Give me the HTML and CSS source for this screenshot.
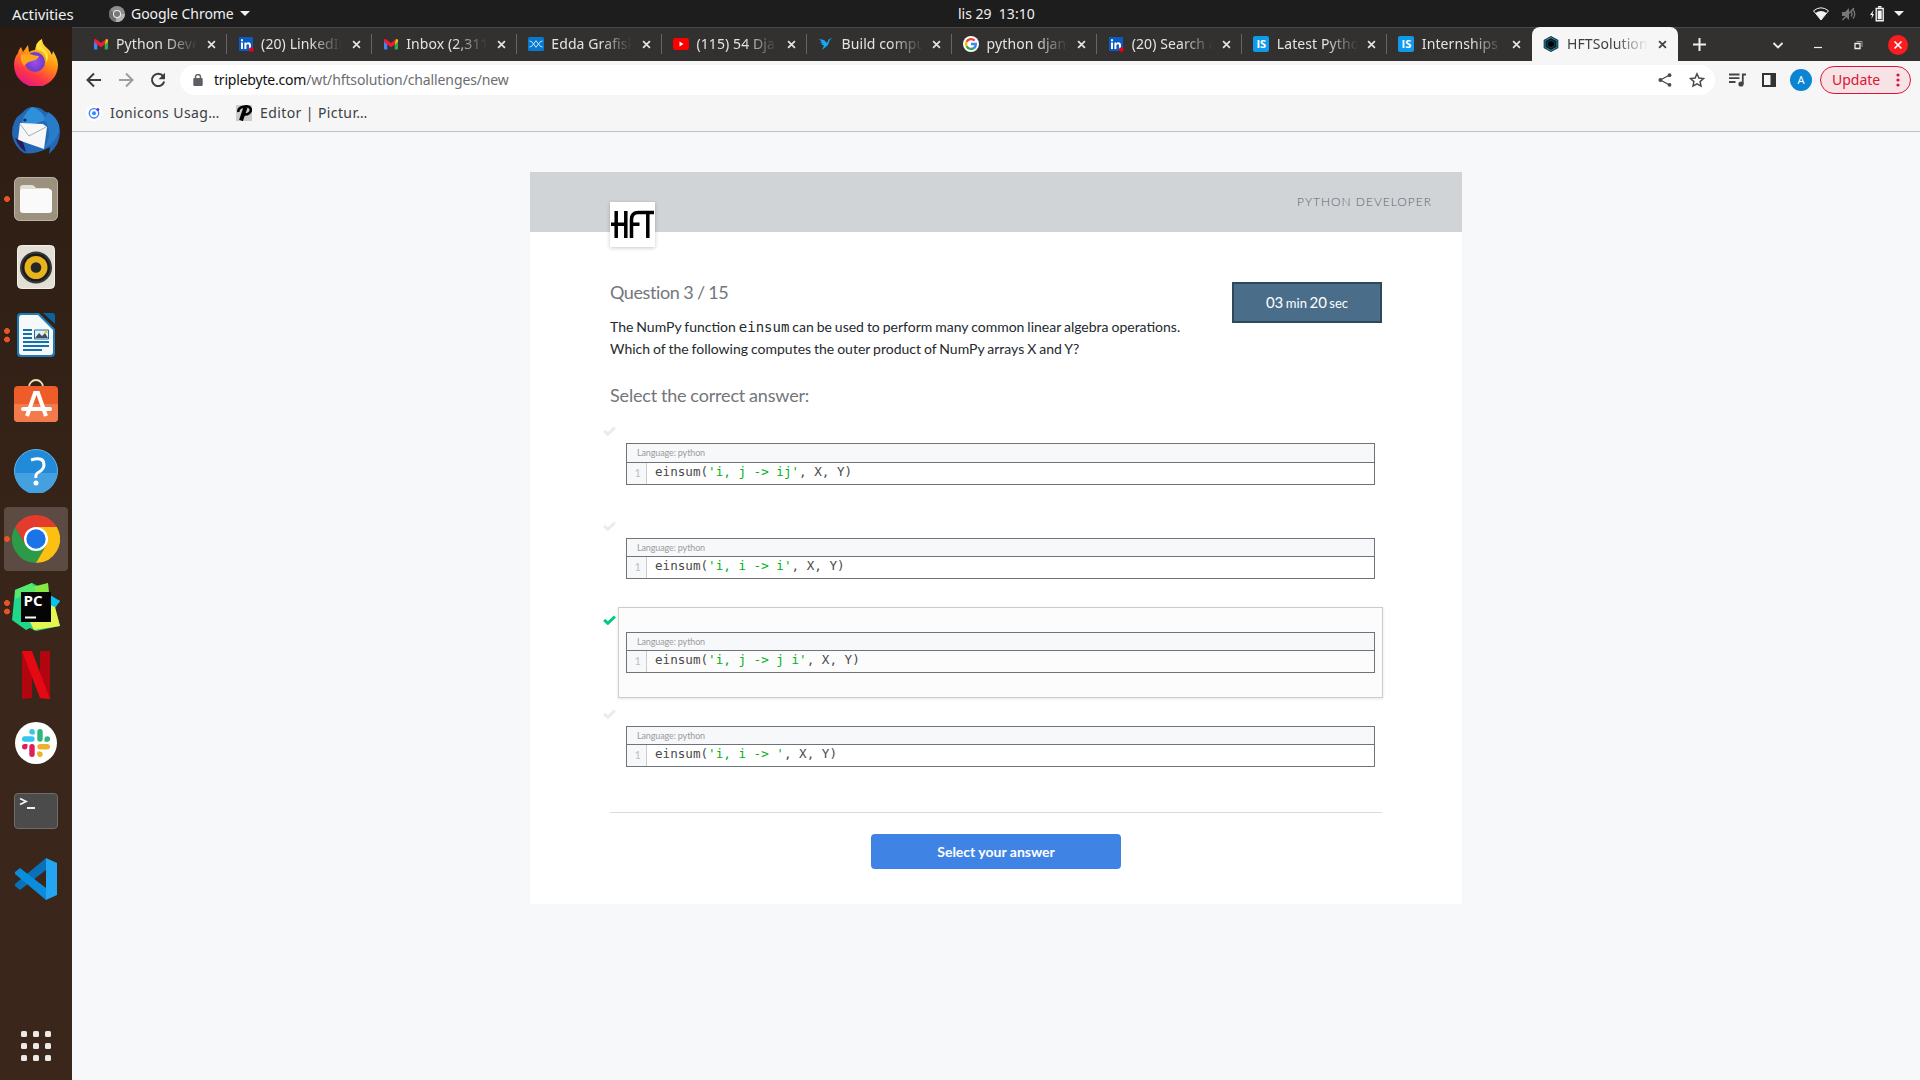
FILE: index.html
```html
<!DOCTYPE html>
<html lang="en">
<head>
<meta charset="utf-8">
<title>HFTSolution</title>
<link rel="stylesheet" href="styles.css">
</head>
<body>
<svg class="defs" width="0" height="0">
  <symbol id="x" viewBox="0 0 10 10"><path d="M1.2 1.2l7.6 7.6M8.8 1.2L1.2 8.8" stroke="currentColor" stroke-width="1.9" fill="none"/></symbol>
  <symbol id="gmail" viewBox="0 0 16 16"><path d="M1 4v8.5q0 1 1 1h2.300V7z" fill="#4285f4"/><path d="M15 4v8.500q0 1-1 1h-2.300V7z" fill="#34a853"/><path d="M11.700 4.500L13 3.200q2-1 2 1.300v1.300l-3.300 2.600z" fill="#fbbc04"/><path d="M1 4.500q0-2.300 2-1.300L8 7l5-3.800-1.300 5.200L8 11.200 4.300 8.400 1 5.800z" fill="#ea1f35"/></symbol>
  <symbol id="linkedin" viewBox="0 0 16 16"><rect x="1" y="1" width="14" height="14" rx="1" fill="#0a5bc4"/><path d="M3 6.500h2V13H3zM3 3.300h2v2H3zM6.400 6.500h1.900v.9c1.200-1.700 4.700-1.400 4.700 1.600v4h-2V9.600c0-2-2.600-1.900-2.600 0V13h-2z" fill="#fff"/><circle cx="13.300" cy="13.600" r="2.400" fill="#f00014"/></symbol>
  <symbol id="edda" viewBox="0 0 16 16"><rect y="1" width="16" height="14" rx="1.500" fill="#0878d1"/><path d="M1.500 5Q4 5 5.500 8T9 11M1.500 11Q4 11 5.500 8T9 5M7 5q2 0 3.500 3t4 3M7 11q2 0 3.500-3t4-3" stroke="#c4e4fb" stroke-width="1" fill="none"/></symbol>
  <symbol id="youtube" viewBox="0 0 16 16"><rect y="2" width="16" height="12" rx="3" fill="#f00"/><path d="M6.500 5.500v5l4-2.500z" fill="#fff"/></symbol>
  <symbol id="bird" viewBox="0 0 16 16"><path d="M1 3l5 1 3 3 2-4 4-1-3 1.500-2 5.500-3 2.500-3 2.500 2-4.500-3-1 2-.6-3-1.500 2-.3z" fill="#17a7f8"/></symbol>
  <symbol id="google" viewBox="0 0 16 16"><circle cx="8" cy="8" r="8" fill="#fff"/><g fill="none" stroke-width="2.400"><path d="M11.600 4.600A5 5 0 0 0 3.600 5.800" stroke="#ea4335"/><path d="M3.600 5.700a5 5 0 0 0 0 4.600" stroke="#fbbc04"/><path d="M3.600 10.200a5 5 0 0 0 7.800 1.500" stroke="#34a853"/><path d="M11.300 11.800A5 5 0 0 0 12.800 8H8" stroke="#4285f4"/></g></symbol>
  <symbol id="hex" viewBox="0 0 16 16"><path d="M8 0l7.300 4v8L8 16 .7 12V4z" fill="#111b22"/><path d="M8 1.500l6 3.300v6.400l-6 3.300-6-3.300V4.800z" fill="none" stroke="#1686a3" stroke-width="1.200"/><path d="M8 4.500l3.500 1.700v3.600L8 11.500 4.500 9.800V6.200z" fill="#000" stroke="#0d5a70" stroke-width=".7"/></symbol>
  <symbol id="check" viewBox="0 0 13 10"><path d="M1.200 4.800l3.600 3.500L11.900 1.500" fill="none" stroke="currentColor" stroke-width="3"/></symbol>
</svg>

<header class="topbar">
  <span class="activities">Activities</span>
  <span class="appmenu">
    <svg width="16" height="16" viewBox="0 0 16 16"><circle cx="8" cy="8" r="8" fill="#8f8f8f"/><path d="M8 8L1 4a8 8 0 0 0 5 11.800z" fill="#6f6f6f"/><path d="M8 8h8a8 8 0 0 1-9 8z" fill="#b4b4b4"/><circle cx="8" cy="8" r="4" fill="#eee"/><circle cx="8" cy="8" r="3" fill="#777"/></svg>
    <span class="app-name">Google Chrome</span>
    <i class="caret"></i>
  </span>
  <span class="clock">lis 29&nbsp; 13:10</span>
  <span class="tray">
    <svg width="16" height="14" viewBox="0 0 16 14"><path d="M.5 3.800q7.500-6 15 0L8 13z" fill="none" stroke="#f2f2f2"/><path d="M2.500 6q5.500-4 11 0L8 13z" fill="#f2f2f2"/></svg>
    <svg width="16" height="14" viewBox="0 0 16 14"><path d="M1 5h3l4-4v12L4 9H1z" fill="#777"/><path d="M10 4.500q2 2.500 0 5M12 2.500q3.500 4.500 0 9M1.500 13L13 1" fill="none" stroke="#777" stroke-width="1.300"/></svg>
    <svg width="16" height="16" viewBox="0 0 16 16"><path d="M4.500 4L1 9h2l-.5 4L5 8H3.500z" fill="#f2f2f2"/><path d="M7.200 2.500h7v12.300h-7zM9 .8h3.500" fill="none" stroke="#f2f2f2" stroke-width="1.400"/><path d="M8.700 4.500h4v8.800h-4z" fill="#f2f2f2"/></svg>
    <i class="caret"></i>
  </span>
</header>

<div class="desktop">
<nav class="dock">
  <div class="app firefox"><svg width="46" height="48" viewBox="0 0 46 48"><defs><linearGradient id="ff" x1=".8" y1="0" x2=".3" y2="1"><stop offset="0" stop-color="#fff44f"/><stop offset=".4" stop-color="#ff980e"/><stop offset=".75" stop-color="#ff3647"/><stop offset="1" stop-color="#e31587"/></linearGradient><radialGradient id="fp"><stop offset="0" stop-color="#a04bf0"/><stop offset="1" stop-color="#6a3cc8"/></radialGradient></defs><path d="M5 15q1-4 3-6l2 5 5-7 1 7q3-2 6-2 1-7 7-11 0 5 5 9 3 2 5 7l1-4q5 8 5 14a22 22 0 0 1-44 0q0-7 4-12z" fill="url(#ff)"/><circle cx="22" cy="24" r="10" fill="url(#fp)"/><path d="M8 17q6-3 12 0 3 1 6 1-1 4-7 5-5 1-8 5-4-5-3-11z" fill="#ffa51e"/><path d="M24 12q10 1 9 13 5-9-2-14-5-5-2-10-8 4-5 11z" fill="#ffe13e"/></svg></div>
  <div class="app"><svg width="48" height="48" viewBox="0 0 48 48"><path d="M20 0q9 0 12 4 14 5 16 20 0 14-11 23l1-7q-14 8-26 6-10-6-12-19Q0 12 10 6q5-6 10-6z" fill="#2468b5"/><path d="M20 0q10 3 14 13l-24 8Q8 10 20 0z" fill="#2f8fda"/><path d="M8 16l23 1 4 3-3 22-26-9z" fill="#f7f7f8"/><path d="M8 17l9 12 17-9" fill="none" stroke="#a9adb3"/><path d="M32 12q10 14 0 30 17-11 15-24-3-9-11-13z" fill="#287cca"/><circle cx="13" cy="13" r="1.600" fill="#132b49"/><path d="M3 31q4 10 11 14l-3-10z" fill="#2a1d5c"/></svg></div>
  <div class="app run1"><svg width="44" height="44" viewBox="0 0 44 44"><rect x=".5" y=".5" width="43" height="43" rx="5" fill="#9b917e" stroke="#bcb5a5"/><path d="M6 11q0-3 3-3h9q2 0 4 3h13v8H6z" fill="#e3dfd3"/><rect x="6" y="12" width="32" height="24" rx="3" fill="#fafafa"/></svg></div>
  <div class="app"><svg width="38" height="44" viewBox="0 0 38 44"><rect x=".5" y=".5" width="37" height="43" rx="4" fill="#e3dfd5" stroke="#f3f1ea"/><circle cx="19" cy="22.500" r="16" fill="#38383a"/><circle cx="19" cy="22.500" r="14" fill="#1c1c1c"/><circle cx="19" cy="22.500" r="11.500" fill="#e9b41b"/><circle cx="19" cy="22.500" r="5.300" fill="#262626"/></svg></div>
  <div class="app run2"><svg width="38" height="44" viewBox="0 0 38 44"><path d="M4 0h18l16 16v24q0 4-4 4H4q-4 0-4-4V4q0-4 4-4z" fill="#1a7db8"/><path d="M2 5q0-3 3-3h16l15 15v22q0 3-3 3H5q-3 0-3-3z" fill="#f6f8f9"/><path d="M26 0h9q3 0 3 3v8z" fill="#0b62a0"/><path d="M6 17h9M6 21h9M6 25h9M6 29h26M6 33h26M6 37h19" stroke="#1372ac" stroke-width="2"/><path d="M17.500 17h14v9h-14z" fill="#dff2fb" stroke="#1372ac"/><path d="M18 25l4-5 3 3 3-3 3 5z" fill="#454e54"/><circle cx="29" cy="19" r="1.500" fill="#f5c516"/></svg></div>
  <div class="app store"><svg width="44" height="46" viewBox="0 0 44 46"><path d="M15 10V8a7 7 0 0 1 14 0v2" fill="none" stroke="#f3dfb2" stroke-width="1.800"/><rect y="7" width="44" height="36" rx="4" fill="#ee5c29"/><path d="M0 25h44v14q0 4-4 4H4q-4 0-4-4z" fill="#f37a4c"/><path d="M13 37l8-23h3l8 23" fill="none" stroke="#fff" stroke-width="4"/><path d="M9 30h27" stroke="#fff" stroke-width="4" stroke-linecap="round"/></svg></div>
  <div class="app"><svg width="44" height="44" viewBox="0 0 44 44"><circle cx="22" cy="22" r="21.500" fill="#228bd9" stroke="#65b3e9"/><path d="M1 24a21 21 0 0 0 42 0z" fill="#45a0e0"/><path d="M17 11q13-4 13 5 0 4-5 7-4 2-3 6" fill="none" stroke="#fff" stroke-width="3"/><circle cx="22" cy="34" r="2.500" fill="#fff"/></svg></div>
  <div class="app run1 current"><svg width="48" height="48" viewBox="0 0 48 48"><path d="M3.200 12A24 24 0 0 1 44.800 12H24L13.600 30z" fill="#e33b2e"/><path d="M3.200 12l10.400 18h20.800L24 48A24 24 0 0 1 3.200 12z" fill="#2c9b48"/><path d="M24 12h20.800A24 24 0 0 1 24 48l10.400-18z" fill="#fcc013"/><circle cx="24" cy="24" r="12" fill="#fff"/><circle cx="24" cy="24" r="9.700" fill="#1b73e8"/></svg></div>
  <div class="app run2"><svg width="48" height="48" viewBox="0 0 48 48"><path d="M3 7L20 0l8 4 8-4 1 14 11 4-5 7 5 18-24 5-6-3-4 2L0 37z" fill="#21d789"/><path d="M20 4l16-4 1 12-20 2z" fill="#86e843"/><path d="M38 12l10 6-6 7-5 1z" fill="#07c3f2"/><path d="M38 22l5 2 5 19-26 4-4-8z" fill="#e5f650"/><path d="M3 7l17-7 4 8-21 8z" fill="#57e96e"/><rect x="9" y="9" width="30" height="30" fill="#050505"/><path d="M13 34.500h11" stroke="#fff" stroke-width="2"/><text x="11.500" y="23" class="pc">PC</text></svg></div>
  <div class="app"><svg width="28" height="48" viewBox="0 0 28 48"><path d="M0 0h10v47L0 48zM18 0h10v48l-10-1z" fill="#b1060f"/><path d="M0 0h10l18 48-10-1z" fill="#e50914"/></svg></div>
  <div class="app"><svg width="42" height="42" viewBox="0 0 42 42"><circle cx="21" cy="21" r="21" fill="#fff"/><g fill="none" stroke-width="5.400" stroke-linecap="round"><path d="M17 9.700h0M9.700 17H17" stroke="#36c5f0"/><path d="M25 9.700V17M32.300 17h0" stroke="#2eb67d"/><path d="M25 24.700h7.300M25 32.300h0" stroke="#ecb22e"/><path d="M17 24.700v7.600M9.700 24.700h0" stroke="#e01e5a"/></g><path d="M17 9.700h2.700v2.700H17z" fill="#36c5f0"/><path d="M29.600 17h2.700v2.700h-2.700z" fill="#2eb67d"/><path d="M22.300 29.600H25v2.700h-2.700z" fill="#ecb22e"/><path d="M9.700 22h2.700v2.700H9.700z" fill="#e01e5a"/></svg></div>
  <div class="app"><svg width="44" height="36" viewBox="0 0 44 36"><rect x=".5" y=".5" width="43" height="35" rx="3.500" fill="#4b4b4b" stroke="#6d6d6d"/><path d="M6 5.500l6 3-6 3M13 15h8" fill="none" stroke="#f4f4f4" stroke-width="1.800"/></svg></div>
  <div class="app"><svg width="42" height="42" viewBox="0 0 42 42"><path d="M31 0v12L5 32l-5-4v-2z" fill="#0871b8"/><path d="M31 42V30L5 10l-5 4v2z" fill="#0c8cdc"/><path d="M31 0l11 5v32l-11 5z" fill="#24a5f2"/></svg></div>
  <div class="all-apps"><i></i><i></i><i></i><i></i><i></i><i></i><i></i><i></i><i></i></div>
</nav>

<div class="browser">
  <div class="tabs">
    <div class="tab"><svg class="fav"><use href="#gmail"/></svg><span class="title">Python Developer</span><svg class="close"><use href="#x"/></svg></div>
    <div class="tab"><svg class="fav"><use href="#linkedin"/></svg><span class="title">(20) LinkedIn</span><svg class="close"><use href="#x"/></svg></div>
    <div class="tab"><svg class="fav"><use href="#gmail"/></svg><span class="title">Inbox (2,311)</span><svg class="close"><use href="#x"/></svg></div>
    <div class="tab"><svg class="fav"><use href="#edda"/></svg><span class="title">Edda Grafisk</span><svg class="close"><use href="#x"/></svg></div>
    <div class="tab"><svg class="fav"><use href="#youtube"/></svg><span class="title">(115) 54 Django</span><svg class="close"><use href="#x"/></svg></div>
    <div class="tab"><svg class="fav"><use href="#bird"/></svg><span class="title">Build compu</span><svg class="close"><use href="#x"/></svg></div>
    <div class="tab"><svg class="fav"><use href="#google"/></svg><span class="title">python django</span><svg class="close"><use href="#x"/></svg></div>
    <div class="tab"><svg class="fav"><use href="#linkedin"/></svg><span class="title">(20) Search all</span><svg class="close"><use href="#x"/></svg></div>
    <div class="tab"><b class="fav is">IS</b><span class="title">Latest Python</span><svg class="close"><use href="#x"/></svg></div>
    <div class="tab last"><b class="fav is">IS</b><span class="title">Internships</span><svg class="close"><use href="#x"/></svg></div>
    <div class="tab active"><svg class="fav"><use href="#hex"/></svg><span class="title">HFTSolution</span><svg class="close"><use href="#x"/></svg></div>
    <svg class="plus" width="13" height="13" viewBox="0 0 13 13"><path d="M6.500 0v13M0 6.500h13" stroke="#eee" stroke-width="2"/></svg>
    <div class="window-buttons">
      <svg width="20" height="20" viewBox="0 0 20 20"><path d="M5.500 8l4.500 4.500L14.500 8" fill="none" stroke="#eee" stroke-width="1.800"/></svg>
      <svg width="20" height="20" viewBox="0 0 20 20"><path d="M6 12.500h8" stroke="#eee" stroke-width="1.200"/></svg>
      <svg width="20" height="20" viewBox="0 0 20 20"><path d="M7 8.500h5v5H7z" fill="none" stroke="#eee" stroke-width="1.300"/><path d="M8.500 6.500H14V12" fill="none" stroke="#999"/></svg>
      <svg width="20" height="20" viewBox="0 0 20 20"><circle cx="10" cy="10" r="10" fill="#fb1d1d"/><path d="M6.500 6.500l7 7M13.500 6.500l-7 7" stroke="#fff" stroke-width="1.600"/></svg>
    </div>
  </div>
  <div class="toolbar">
    <svg width="16" height="16" viewBox="0 0 16 16"><path d="M15 8H2M8 1.500L1.500 8 8 14.500" fill="none" stroke="#3c3c3c" stroke-width="2"/></svg>
    <svg width="16" height="16" viewBox="0 0 16 16"><path d="M1 8h13M8 1.500L14.500 8 8 14.500" fill="none" stroke="#9d9d9d" stroke-width="2"/></svg>
    <svg width="16" height="16" viewBox="0 0 16 16"><path d="M13.200 4.200A6.200 6.200 0 1 0 14.200 9.500" fill="none" stroke="#3c3c3c" stroke-width="2"/><path d="M15 .8v6.400H8.600z" fill="#3c3c3c"/></svg>
    <div class="omnibox">
      <svg width="10" height="12" viewBox="0 0 10 12"><rect x=".3" y="4" width="9.400" height="8" rx="1" fill="#5c6065"/><path d="M2.500 5V3a2.500 2.500 0 0 1 5 0v2" fill="none" stroke="#5c6065" stroke-width="1.400"/></svg>
      <span class="url"><b>triplebyte.com</b>/wt/hftsolution/challenges/new</span>
      <svg width="14" height="14" viewBox="0 0 14 14"><path d="M11.500 2L2.500 7l9 5" fill="none" stroke="#4a4a4a" stroke-width="1.300"/><circle cx="11.500" cy="2.200" r="1.900" fill="#4a4a4a"/><circle cx="2.400" cy="7" r="1.900" fill="#4a4a4a"/><circle cx="11.500" cy="11.800" r="1.900" fill="#4a4a4a"/></svg>
      <svg width="16" height="16" viewBox="0 0 16 16"><path d="M8 1.800l1.900 4.200 4.600.5-3.400 3.100.9 4.500L8 11.800l-4 2.300.9-4.500L1.500 6.500 6.100 6z" fill="none" stroke="#4a4a4a" stroke-width="1.500"/></svg>
    </div>
    <svg class="media" width="17" height="14" viewBox="0 0 17 14"><path d="M0 1.500h10.500M0 5.200h10.500M0 9h6.500M13.800 11V1.500H17" fill="none" stroke="#444" stroke-width="1.800"/><circle cx="12" cy="11" r="2.600" fill="#444"/></svg>
    <svg class="panel" width="14" height="14" viewBox="0 0 14 14"><path d="M1 1h12v12H1z" fill="none" stroke="#333" stroke-width="2"/><path d="M8.500 0H14v14H8.500z" fill="#333"/></svg>
    <span class="avatar">A</span>
    <span class="update">Update<svg width="4" height="14" viewBox="0 0 4 14"><g fill="#dc1433"><circle cx="2" cy="2" r="1.600"/><circle cx="2" cy="7" r="1.600"/><circle cx="2" cy="12" r="1.600"/></g></svg></span>
  </div>
  <div class="bookmarks">
    <svg width="16" height="16" viewBox="0 0 16 16"><circle cx="8" cy="8" r="8" fill="#fff"/><circle cx="8" cy="8.300" r="4.700" fill="none" stroke="#3a7dff" stroke-width="1.400"/><circle cx="8" cy="8.300" r="2" fill="#2d8cff"/><circle cx="11.800" cy="4.500" r="1.500" fill="#5a28ff"/></svg>
    <span class="bm1">Ionicons Usag…</span>
    <svg width="16" height="16" viewBox="0 0 16 16"><rect width="16" height="16" fill="#ccc"/><path d="M2.500 7C1 1 13 0 14.500 3.500S12 10 8 9.500" fill="none" stroke="#000" stroke-width="2.600"/><path d="M9.500 2.500L5 15.500" stroke="#000" stroke-width="4"/></svg>
    <span class="bm2">Editor | Pictur…</span>
  </div>

  <main class="page">
    <section class="card">
      <div class="banner">
        <div class="logo"><svg width="45" height="45" viewBox="0 0 45 45"><path d="M6.200 9v27M15.800 9v27M1 22.300h16.500M21.500 36V17.500q0-7 7-7H44M21.500 22.300h8M37.800 10.500V36" fill="none" stroke="#000" stroke-width="3.500"/></svg></div>
        <span class="role">PYTHON DEVELOPER</span>
      </div>
      <div class="body">
        <div class="intro">
          <div class="question">
            <h2>Question 3 / 15</h2>
            <p>The NumPy function <code>einsum</code> can be used to perform many common linear algebra operations. Which of the following computes the outer product of NumPy arrays X and Y?</p>
          </div>
          <div class="timer"><span>03</span> min <span>20</span> sec</div>
        </div>
        <h2 class="prompt">Select the correct answer:</h2>
        <div class="answers">
          <div class="answer first"><svg class="tick"><use href="#check"/></svg><div class="choice"><div class="code"><div class="lang">Language: python</div><div class="line"><i>1</i><pre>einsum(<em>'i, j -&gt; ij'</em>, X, Y)</pre></div></div></div></div>
          <div class="answer"><svg class="tick"><use href="#check"/></svg><div class="choice"><div class="code"><div class="lang">Language: python</div><div class="line"><i>1</i><pre>einsum(<em>'i, i -&gt; i'</em>, X, Y)</pre></div></div></div></div>
          <div class="answer selected"><svg class="tick"><use href="#check"/></svg><div class="choice"><div class="code"><div class="lang">Language: python</div><div class="line"><i>1</i><pre>einsum(<em>'i, j -&gt; j i'</em>, X, Y)</pre></div></div></div></div>
          <div class="answer"><svg class="tick"><use href="#check"/></svg><div class="choice"><div class="code"><div class="lang">Language: python</div><div class="line"><i>1</i><pre>einsum(<em>'i, i -&gt; '</em>, X, Y)</pre></div></div></div></div>
        </div>
        <div class="submit"><button>Select your answer</button></div>
      </div>
    </section>
  </main>
</div>
</div>
</body>
</html>
```
FILE: styles.css
```css
* { box-sizing: border-box; }
body { margin: 0; width: 1920px; height: 1080px; overflow: hidden; background: #f6f8fa; font: 14px/20px "Noto Sans", "Open Sans", sans-serif; }
svg { display: block; flex: none; }
.defs { position: absolute; }

/* system bar */
.topbar { display: grid; grid-template-columns: 97px 849px 78px 1fr; height: 27px; align-items: center; background: #1d1d1d; color: #f0f0f0; padding: 0 16px 0 12px; font-size: 14px; white-space: nowrap; }
.activities { font-size: 15px; letter-spacing: -.1px; }
.appmenu { display: flex; align-items: center; gap: 6px; }
.app-name { letter-spacing: -.05px; }
.caret { border: 5px solid transparent; border-top-color: #f0f0f0; border-bottom: 0; }
.tray { display: flex; justify-content: flex-end; align-items: center; gap: 12px; }
.tray .caret { margin-left: -3px; }

.desktop { display: flex; height: 1053px; }

/* dock */
.dock { flex: none; width: 72px; padding-top: 2px; display: flex; flex-direction: column; background: linear-gradient(#2b1c13, #3a261a 60%, #3a261a); }
.app { height: 68px; display: flex; align-items: center; justify-content: center; background-repeat: no-repeat; }
.firefox { padding-bottom: 3px; }
.store { padding-bottom: 2px; }
.run1 { background-image: radial-gradient(circle at 7px 34px, #e95420 2.6px, transparent 3.200px); }
.run2 { background-image: radial-gradient(circle at 7px 30px, #e95420 2.6px, transparent 3.200px), radial-gradient(circle at 7px 38.500px, #e95420 2.6px, transparent 3.200px); }
.current { background-image: radial-gradient(circle at 3px 32px, #e95420 2.6px, transparent 3.200px); background-color: #5b4b42; margin: 2px 4px; height: 64px; border-radius: 4px; }
.pc { font: bold 15px "Open Sans", sans-serif; fill: #fff; }
.all-apps { margin: auto 21px 19px; display: grid; grid-template-columns: repeat(3, 6px); gap: 6px; }
.all-apps i { height: 6px; border-radius: 1.500px; background: #ece9e7; }

/* browser chrome */
.browser { flex: 1; display: flex; flex-direction: column; }
.tabs { height: 34px; flex: none; display: flex; align-items: center; background: #333130; border-top: 1px solid #4a4846; padding-left: 9.500px; color: #e4e4e4; }
.tab { flex: none; width: 145.1px; height: 34px; margin-top: -1px; padding: 0 11px; display: flex; align-items: center; position: relative; }
.tab::after { content: ""; position: absolute; right: 0; top: 7px; width: 1px; height: 20px; background: #686664; }
.tab.last::after, .tab.active::after { display: none; }
.tab.active { background: #f6f6f6; color: #3c4043; border-radius: 8px 8px 0 0; }
.fav { width: 16px; height: 16px; flex: none; margin-right: 7.500px; }
.is { background: #109bea; color: #fff; border-radius: 2px; font: bold 11px/16px "Open Sans", sans-serif; text-align: center; }
.title { width: 82px; margin-right: 9.500px; overflow: hidden; white-space: nowrap; letter-spacing: .1px; -webkit-mask-image: linear-gradient(90deg, #000 60%, transparent 100%); mask-image: linear-gradient(90deg, #000 60%, transparent 100%); }
.close { width: 9px; height: 9px; }
.plus { margin-left: 15.500px; }
.window-buttons { display: flex; gap: 20px; margin-left: auto; padding-right: 13px; }
.toolbar { height: 38px; flex: none; background: #f6f6f6; display: flex; align-items: center; padding: 0 10px 0 14px; }
.toolbar > svg { margin-right: 16px; }
.omnibox { width: 1535px; height: 30px; margin-left: -2px; border-radius: 15px; background: #fff; display: flex; align-items: center; padding: 0 10px 0 13px; }
.url { margin: 0 auto 0 11px; color: #6b6d70; letter-spacing: -.12px; }
.url b { font-weight: 400; color: #111; letter-spacing: -.2px; }
.omnibox svg + svg { margin-left: 17px; }
.toolbar > .media { margin: 0 16px 0 14px; }
.toolbar > .panel { margin-right: 14px; }
.avatar { width: 22px; height: 22px; border-radius: 50%; background: #0b84d3; color: #fff; font-size: 11px; line-height: 22px; text-align: center; }
.update { margin-left: 8px; width: 91px; height: 28px; border: 1px solid #dc1433; border-radius: 14px; background: #f7e2e5; color: #dc1433; display: flex; align-items: center; justify-content: space-between; padding: 0 10px 0 11px; }
.bookmarks { height: 33px; flex: none; background: #f6f6f6; border-bottom: 1px solid #c0c0c0; display: flex; align-items: center; padding: 0 0 4px 14px; color: #3c4043; white-space: nowrap; letter-spacing: .4px; }
.bm1 { width: 126px; margin-left: 8px; }
.bm2 { margin-left: 8px; }

/* quiz page */
.page { flex: 1; padding-top: 40px; background: #f6f8fa; font-family: Lato, sans-serif; }
.card { width: 932px; height: 732px; margin-left: 458px; background: #fff; }
.banner { height: 60px; padding: 20px 30px 0 80px; display: flex; justify-content: space-between; background: #d0d4d7; }
.logo { width: 45px; height: 45px; margin-top: 10px; background: #fff; box-shadow: 0 1px 4px rgba(0, 0, 0, .22); }
.role { font-size: 12px; font-weight: 300; letter-spacing: 1px; color: #60646c; }
.body { padding: 49px 80px 0; }
.intro { display: flex; justify-content: space-between; height: 103px; }
h2 { margin: 0; font-size: 18px; line-height: 22px; font-weight: 400; color: #72767c; letter-spacing: -.4px; word-spacing: -.500px; }
.prompt { letter-spacing: -.17px; }
.question { width: 590px; }
.question p { margin: 13px 0 0; font-size: 14px; line-height: 22px; color: #24292e; word-spacing: -.65px; }
.question code { font: 14px/20px "DejaVu Sans Mono", monospace; }
.timer { width: 150px; height: 41px; margin-top: 1px; border: 2px solid #2e485c; background: #4a6e8a; color: #fff; font-size: 13px; line-height: 37px; text-align: center; word-spacing: -.8px; }
.timer span { font-size: 15px; }
.answers { margin: 12px -1px 0 -7px; }
.answer { display: flex; height: 91px; margin-bottom: 3px; }
.answer.first { margin-bottom: 4px; }
.tick { width: 13px; height: 10px; margin: 8px 2px 0 0; color: #ebebeb; }
.selected .tick { color: #00cc7e; }
.choice { width: 765px; height: 91px; padding: 24px 7px; border: 1px solid transparent; }
.selected .choice { background: #fcfcfc; border-color: #ccc; box-shadow: 0 1px 3px rgba(0, 0, 0, .1); }
.code { border: 1px solid #6f7479; }
.lang { height: 18px; padding-left: 10px; border-bottom: 1px solid #6f7479; background: #f6f8fa; font-size: 9px; line-height: 17px; color: #9c9c9c; letter-spacing: -.12px; word-spacing: -.200px; }
.first .lang { height: 19px; line-height: 18px; }
.line { height: 21px; display: flex; }
.line i { width: 20px; border-right: 1px solid #ccc; background: #f6f8fa; padding-right: 5px; text-align: right; color: #c0bdbd; font: 11px/20px Lato, sans-serif; }
.line pre { margin: 0 0 0 8px; font: 12.600px/18px "DejaVu Sans Mono", monospace; color: #4a4a4a; }
.line em { font-style: normal; color: #00b019; }
.submit { margin-top: 20px; padding-top: 21px; border-top: 1px solid #d9dadb; text-align: center; }
.submit button { width: 250px; height: 35px; border: 0; border-radius: 4px; background: #3f84e4; color: #fff; font: bold 14px Lato, sans-serif; }
```
